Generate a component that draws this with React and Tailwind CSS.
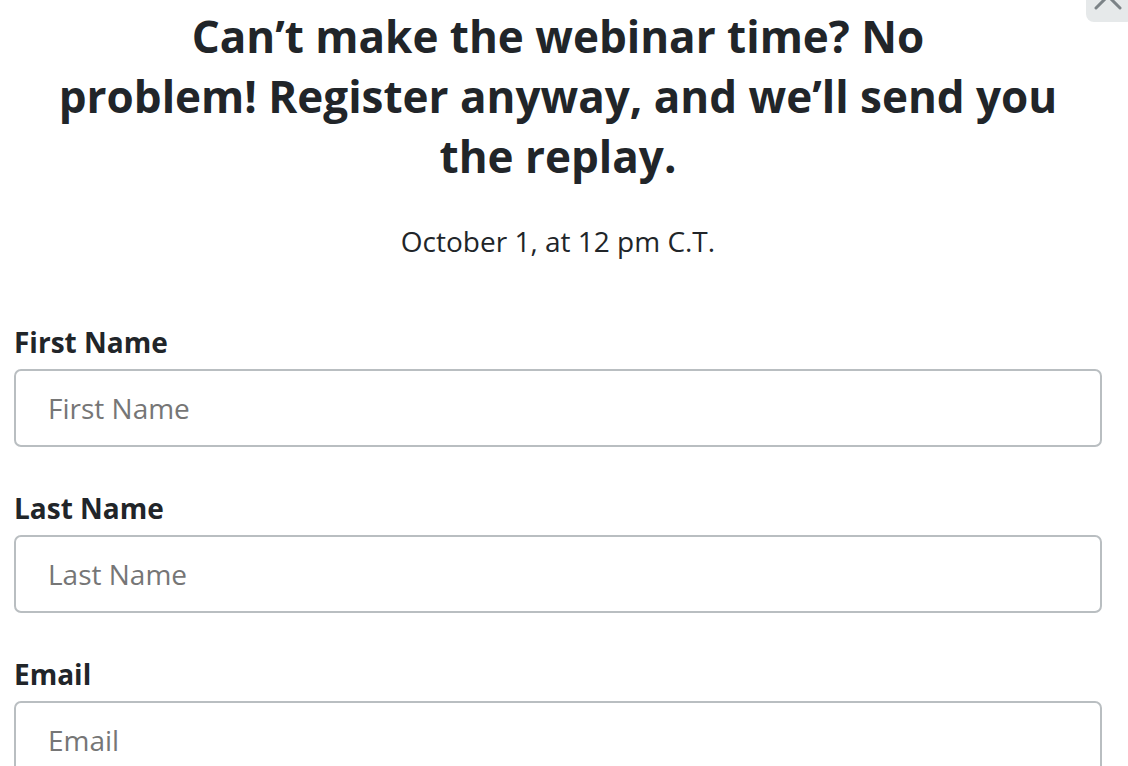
import React from 'react';

const fields = [
  { id: 'first', label: 'First Name' },
  { id: 'last', label: 'Last Name' },
  { id: 'email', label: 'Email' },
];

function Field({ id, label }) {
  return (
    <div className="mb-[44px]">
      <label htmlFor={id} className="block text-[28px] leading-[34px] font-bold text-[#212529] mb-[10px]">
        {label}
      </label>
      <input
        id={id}
        placeholder={label}
        className="block w-full h-[78px] px-[32px] border-2 border-[#b9bec1] rounded-[7px] bg-white text-[28px] text-[#212529] placeholder:text-[#767676] outline-none"
      />
    </div>
  );
}

export default function App() {
  return (
    <div className="relative w-[1128px] h-[766px] overflow-hidden bg-white font-['Open_Sans',sans-serif]">
      <button className="absolute right-[-6px] top-[-26px] w-[48px] h-[48px] rounded-[8px] bg-[#e6e9ea] flex items-center justify-center">
        <svg width="36" height="36" viewBox="0 0 36 36" className="translate-x-[-2px] translate-y-[-2px]">
          <path d="M6 6 L30 30 M30 6 L6 30" stroke="#7c8387" strokeWidth="3" strokeLinecap="round" />
        </svg>
      </button>

      <div className="w-[1088px] ml-[14px] pt-[6px]">
        <h1 className="text-center text-[44px] leading-[60px] font-bold text-[#212529]">
          Can’t make the webinar time? No
          <br />
          problem! Register anyway, and we’ll send you
          <br />
          the replay.
        </h1>
        <p className="text-center text-[28px] leading-[34px] text-[#212529] mt-[38px]">
          October 1, at 12 pm C.T.
        </p>
        <form className="mt-[67px]">
          {fields.map((f) => (
            <Field key={f.id} {...f} />
          ))}
        </form>
      </div>
    </div>
  );
}
